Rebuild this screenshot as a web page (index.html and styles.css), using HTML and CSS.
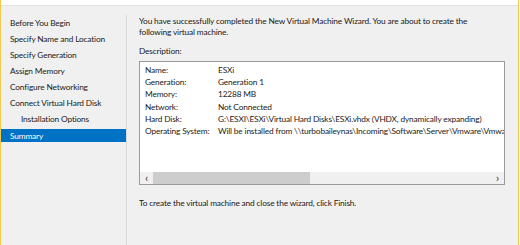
FILE: index.html
```html
<!DOCTYPE html>
<html lang="en">
<head>
  <meta charset="UTF-8">
  <title>New Virtual Machine Wizard - Summary</title>
  <link rel="stylesheet" href="styles.css">
</head>
<body>
  <div class="window">
    <div class="topbar"></div>
    <div class="main">
      <ul class="steps">
        <li>Before You Begin</li>
        <li>Specify Name and Location</li>
        <li>Specify Generation</li>
        <li>Assign Memory</li>
        <li>Configure Networking</li>
        <li>Connect Virtual Hard Disk</li>
        <li class="sub">Installation Options</li>
        <li class="active">Summary</li>
      </ul>
      <div class="content">
        <p class="intro">You have successfully completed the New Virtual Machine Wizard. You are about to create the following virtual machine.</p>
        <p class="label">Description:</p>
        <div class="listbox">
          <div class="rows">
            <div class="row"><span class="key">Name:</span><span>ESXi</span></div>
            <div class="row"><span class="key">Generation:</span><span>Generation 1</span></div>
            <div class="row"><span class="key">Memory:</span><span>12288 MB</span></div>
            <div class="row"><span class="key">Network:</span><span>Not Connected</span></div>
            <div class="row"><span class="key">Hard Disk:</span><span>G:\ESXI\ESXi\Virtual Hard Disks\ESXi.vhdx (VHDX, dynamically expanding)</span></div>
            <div class="row"><span class="key">Operating System:</span><span>Will be installed from \\turbobaileynas\Incoming\Software\Server\Vmware\Vmwar</span></div>
          </div>
          <div class="hscroll">
            <span class="arrow">&#8249;</span>
            <div class="track"><div class="thumb"></div></div>
            <span class="arrow">&#8250;</span>
          </div>
        </div>
        <p class="finish">To create the virtual machine and close the wizard, click Finish.</p>
      </div>
    </div>
  </div>
</body>
</html>
```

FILE: styles.css
```css
body {
  margin: 0;
  background: #ffffff;
  font-family: Lato, 'Noto Sans', sans-serif;
  font-size: 8.3px;
  letter-spacing: -0.15px;
  color: #1a1a1a;
}
.window {
  width: 517px;
  height: 245px;
  border-left: 1px solid #f2c94c;
  border-right: 1px solid #f2c94c;
  background: #f0f0f0;
  display: flex;
  flex-direction: column;
}
.topbar {
  height: 5px;
  background: #ffffff;
  border-bottom: 1px solid #e2e2e2;
}
.main {
  flex: 1;
  display: flex;
}
.steps {
  list-style: none;
  margin: 9px 0 0;
  padding: 0;
  width: 125px;
  border-right: 1px solid #dadada;
}
.steps li {
  height: 16px;
  line-height: 17px;
  padding-left: 9px;
  white-space: nowrap;
}
.steps li.sub {
  padding-left: 20px;
}
.steps li.active {
  height: 13px;
  line-height: 14px;
  margin: 2px 0 1px;
  background: #0072c6;
  color: #ffffff;
}
.content {
  flex: 1;
  padding: 10px 12px 0 12px;
  min-width: 0;
}
.content p {
  margin: 0;
}
.intro {
  line-height: 11px;
  width: 350px;
}
.label {
  margin-top: 8px !important;
  line-height: 11px;
}
.listbox {
  margin-top: 4px;
  width: 364px;
  height: 122px;
  border: 1px solid #9a9a9a;
  background: #ffffff;
  display: flex;
  flex-direction: column;
}
.rows {
  flex: 1;
  padding-top: 2px;
  overflow: hidden;
}
.row {
  display: flex;
  height: 12.2px;
  line-height: 12px;
  white-space: nowrap;
  padding-left: 5px;
}
.key {
  width: 73px;
  flex-shrink: 0;
}
.hscroll {
  height: 12px;
  background: #f0f0f0;
  display: flex;
  align-items: center;
}
.arrow {
  width: 13px;
  text-align: center;
  color: #606060;
  font-size: 11px;
  line-height: 12px;
  font-weight: bold;
}
.track {
  flex: 1;
  height: 12px;
}
.thumb {
  width: 157px;
  height: 12px;
  background: #cdcdcd;
}
.finish {
  margin-top: 13px !important;
  line-height: 11px;
}
```
